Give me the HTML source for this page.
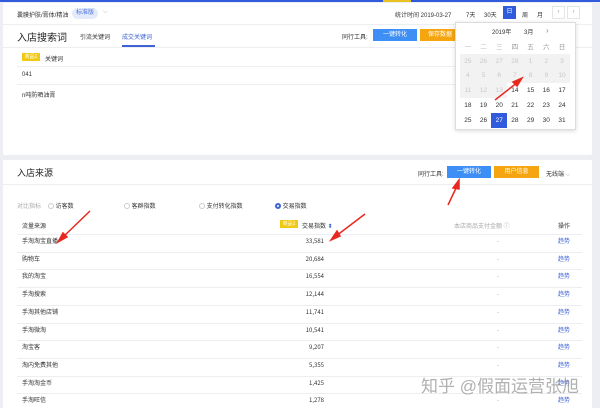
<!DOCTYPE html>
<html><head><meta charset="utf-8"><style>
*{margin:0;padding:0;box-sizing:border-box}
body{width:600px;height:408px;background:#eceef3;position:relative;overflow:hidden;font-family:"Liberation Sans","Noto Sans CJK SC",sans-serif;font-size:6px;color:#333}
.a{position:absolute;white-space:nowrap}
.r{line-height:9px}
.card{position:absolute;background:#fff}
.btn{position:absolute;color:#fff;text-align:center;font-size:6px;line-height:12px}
.line{position:absolute;height:1px;background:#eceef2}
.cal td{width:15.7px;height:14.8px;text-align:center;font-size:6.5px;color:#333}
.cal td.d{color:#c8c8c8;background:#f2f2f2}
</style></head><body>
<div class="a" style="left:0;top:0;width:600px;height:2px;background:#2f5bdc"></div>
<div class="a" style="left:383px;top:0;width:28px;height:2px;background:#e8c320"></div>
<div class="card" style="left:3px;top:3px;width:589px;height:152px;border-radius:2px"></div>
<div class="a" style="left:17px;top:10px">囊膜护肤/膏体/精油</div>
<div class="a" style="left:72px;top:8px;width:26px;height:11px;border-radius:6px;background:#e3ebfb;color:#4a72d8;text-align:center;line-height:11px">标准版</div>
<div class="a" style="left:103px;top:9px;color:#aaa">⌵</div>
<div class="line" style="left:3px;top:24px;width:589px"></div>
<div class="a" style="left:17px;top:29px;font-size:10px;color:#222">入店搜索词</div>
<div class="a" style="left:80px;top:32px">引流关键词</div>
<div class="a" style="left:122px;top:32px;color:#3f63d6">成交关键词</div>
<div class="a" style="left:122px;top:45px;width:33px;height:1.5px;background:#3f63d6"></div>
<div class="line" style="left:3px;top:47px;width:589px"></div>
<div class="a" style="left:342px;top:32px">同行工具:</div>
<div class="btn" style="left:373px;top:29px;width:44px;background:#3d8ff5">一键转化</div>
<div class="btn" style="left:420px;top:29px;width:40px;background:#f5a510">保存数据</div>
<div class="a" style="left:22px;top:53px;width:18px;height:8px;background:#f1c915;color:#fff;font-size:5px;line-height:8px;text-align:center">商品1</div>
<div class="a" style="left:45px;top:54px">关键词</div>
<div class="line" style="left:17px;top:66px;width:440px"></div>
<div class="a" style="left:22px;top:72px">041</div>
<div class="line" style="left:17px;top:84px;width:440px"></div>
<div class="a" style="left:22px;top:90px">n吨防晒油膏</div>
<div class="a" style="left:395px;top:10px">统计时间 2019-03-27</div>
<div class="a" style="left:466px;top:10px">7天</div>
<div class="a" style="left:484px;top:10px">30天</div>
<div class="btn" style="left:503px;top:6px;width:13px;height:13px;line-height:13px;background:#2f5bdc">日</div>
<div class="a" style="left:522px;top:10px">周</div>
<div class="a" style="left:537px;top:10px">月</div>
<div class="a" style="left:552px;top:6px;width:13px;height:13px;border:1px solid #e5e5e5;text-align:center;line-height:11px;color:#999">‹</div>
<div class="a" style="left:567px;top:6px;width:13px;height:13px;border:1px solid #e5e5e5;text-align:center;line-height:11px;color:#999">›</div>
<div class="card" style="left:455px;top:22px;width:121px;height:108px;border:1px solid #ddd;box-shadow:0 1px 4px rgba(0,0,0,.15)"></div>
<div class="a" style="left:492px;top:27px;font-size:6px">2019年</div>
<div class="a" style="left:524px;top:27px;font-size:6px">3月</div>
<div class="a" style="left:546px;top:26px;font-size:8px;color:#888">›</div>
<table class="cal a" style="left:460px;top:39px;border-collapse:collapse">
<tr><td style="color:#bbb">一</td><td style="color:#bbb">二</td><td style="color:#bbb">三</td><td style="color:#999">四</td><td style="color:#999">五</td><td style="color:#999">六</td><td style="color:#999">日</td></tr>
<tr><td class="d">25</td><td class="d">26</td><td class="d">27</td><td class="d">28</td><td class="d">1</td><td class="d">2</td><td class="d">3</td></tr>
<tr><td class="d">4</td><td class="d">5</td><td class="d">6</td><td class="d">7</td><td class="d">8</td><td class="d">9</td><td class="d">10</td></tr>
<tr><td class="d">11</td><td class="d">12</td><td class="d">13</td><td>14</td><td>15</td><td>16</td><td>17</td></tr>
<tr><td>18</td><td>19</td><td>20</td><td>21</td><td>22</td><td>23</td><td>24</td></tr>
<tr><td>25</td><td>26</td><td style="background:#2f5bdc;color:#fff">27</td><td>28</td><td>29</td><td>30</td><td>31</td></tr>
</table>
<div class="card" style="left:3px;top:160px;width:589px;height:248px"></div>
<div class="a" style="left:17px;top:166px;font-size:9px;color:#222">入店来源</div>
<div class="a" style="left:418px;top:169px">同行工具:</div>
<div class="btn" style="left:447px;top:166px;width:44px;background:#3d8ff5">一键转化</div>
<div class="btn" style="left:494px;top:166px;width:45px;background:#f5a510">用户信息</div>
<div class="a" style="left:546px;top:169px">无线端 <span style="color:#aaa">⌵</span></div>
<div class="line" style="left:3px;top:184px;width:589px"></div>
<div class="a" style="left:17px;top:201px;color:#aaa">对比指标</div>
<div class="a" style="left:48px;top:201px"><span style="display:inline-block;width:6px;height:6px;border:1px solid #ccc;border-radius:50%;vertical-align:middle"></span> 访客数</div>
<div class="a" style="left:124px;top:201px"><span style="display:inline-block;width:6px;height:6px;border:1px solid #ccc;border-radius:50%;vertical-align:middle"></span> 客群指数</div>
<div class="a" style="left:199px;top:201px"><span style="display:inline-block;width:6px;height:6px;border:1px solid #ccc;border-radius:50%;vertical-align:middle"></span> 支付转化指数</div>
<div class="a" style="left:275px;top:201px"><span style="display:inline-block;width:6px;height:6px;border:2px solid #3f63d6;border-radius:50%;vertical-align:middle"></span> 交易指数</div>
<div class="a" style="left:22px;top:221px">流量来源</div>
<div class="a" style="left:280px;top:220px;width:18px;height:8px;background:#f1c915;color:#fff;font-size:5px;line-height:8px;text-align:center">商品1</div>
<div class="a" style="left:302px;top:221px">交易指数 <span style="color:#3f63d6">⬍</span></div>
<div class="a" style="left:454px;top:221px;color:#aaa">本店商品支付金额 ⓘ</div>
<div class="a" style="left:558px;top:221px">操作</div>
<div id="rows"></div>
<div class="a" style="left:421px;top:372px;font-size:17px;color:rgba(150,150,150,.75)">知乎 @假面运营张旭</div>
<svg class="a" style="left:0;top:0" width="600" height="408">
<g stroke="#e8281e" stroke-width="1.5" fill="#e8281e">
<line x1="495" y1="100" x2="518" y2="82"/><polygon points="522,78 513,82 517,86"/>
<line x1="448" y1="205" x2="457" y2="186"/><polygon points="459,180 453,188 459,189"/>
<line x1="90" y1="211" x2="62" y2="238"/><polygon points="58,242 63,233 67,237"/>
<line x1="365" y1="214" x2="336" y2="236"/><polygon points="331,240 337,231 340,236"/>
</g></svg>
<script>
var d=[["手淘淘宝直播","33,581"],["购物车","20,684"],["我的淘宝","16,554"],["手淘搜索","12,144"],["手淘其他店铺","11,741"],["手淘微淘","10,541"],["淘宝客","9,207"],["淘内免费其他","5,355"],["手淘淘金币","1,425"],["手淘旺信","1,278"]];
var h="";d.forEach(function(r,i){var y=238+i*17.7;
h+='<div class="line" style="left:17px;top:'+(y-4)+'px;width:565px"></div><div class="a r" style="left:22px;top:'+y+'px">'+r[0]+'</div><div class="a r" style="left:280px;width:44px;text-align:right;top:'+(y-2)+'px;font-family:\'Noto Sans CJK SC\',sans-serif">'+r[1]+'</div><div class="a r" style="left:497px;top:'+y+'px;color:#aaa">-</div><div class="a r" style="left:558px;top:'+y+'px;color:#3f63d6">趋势</div>';});
document.getElementById("rows").innerHTML=h;
</script>
</body></html>
